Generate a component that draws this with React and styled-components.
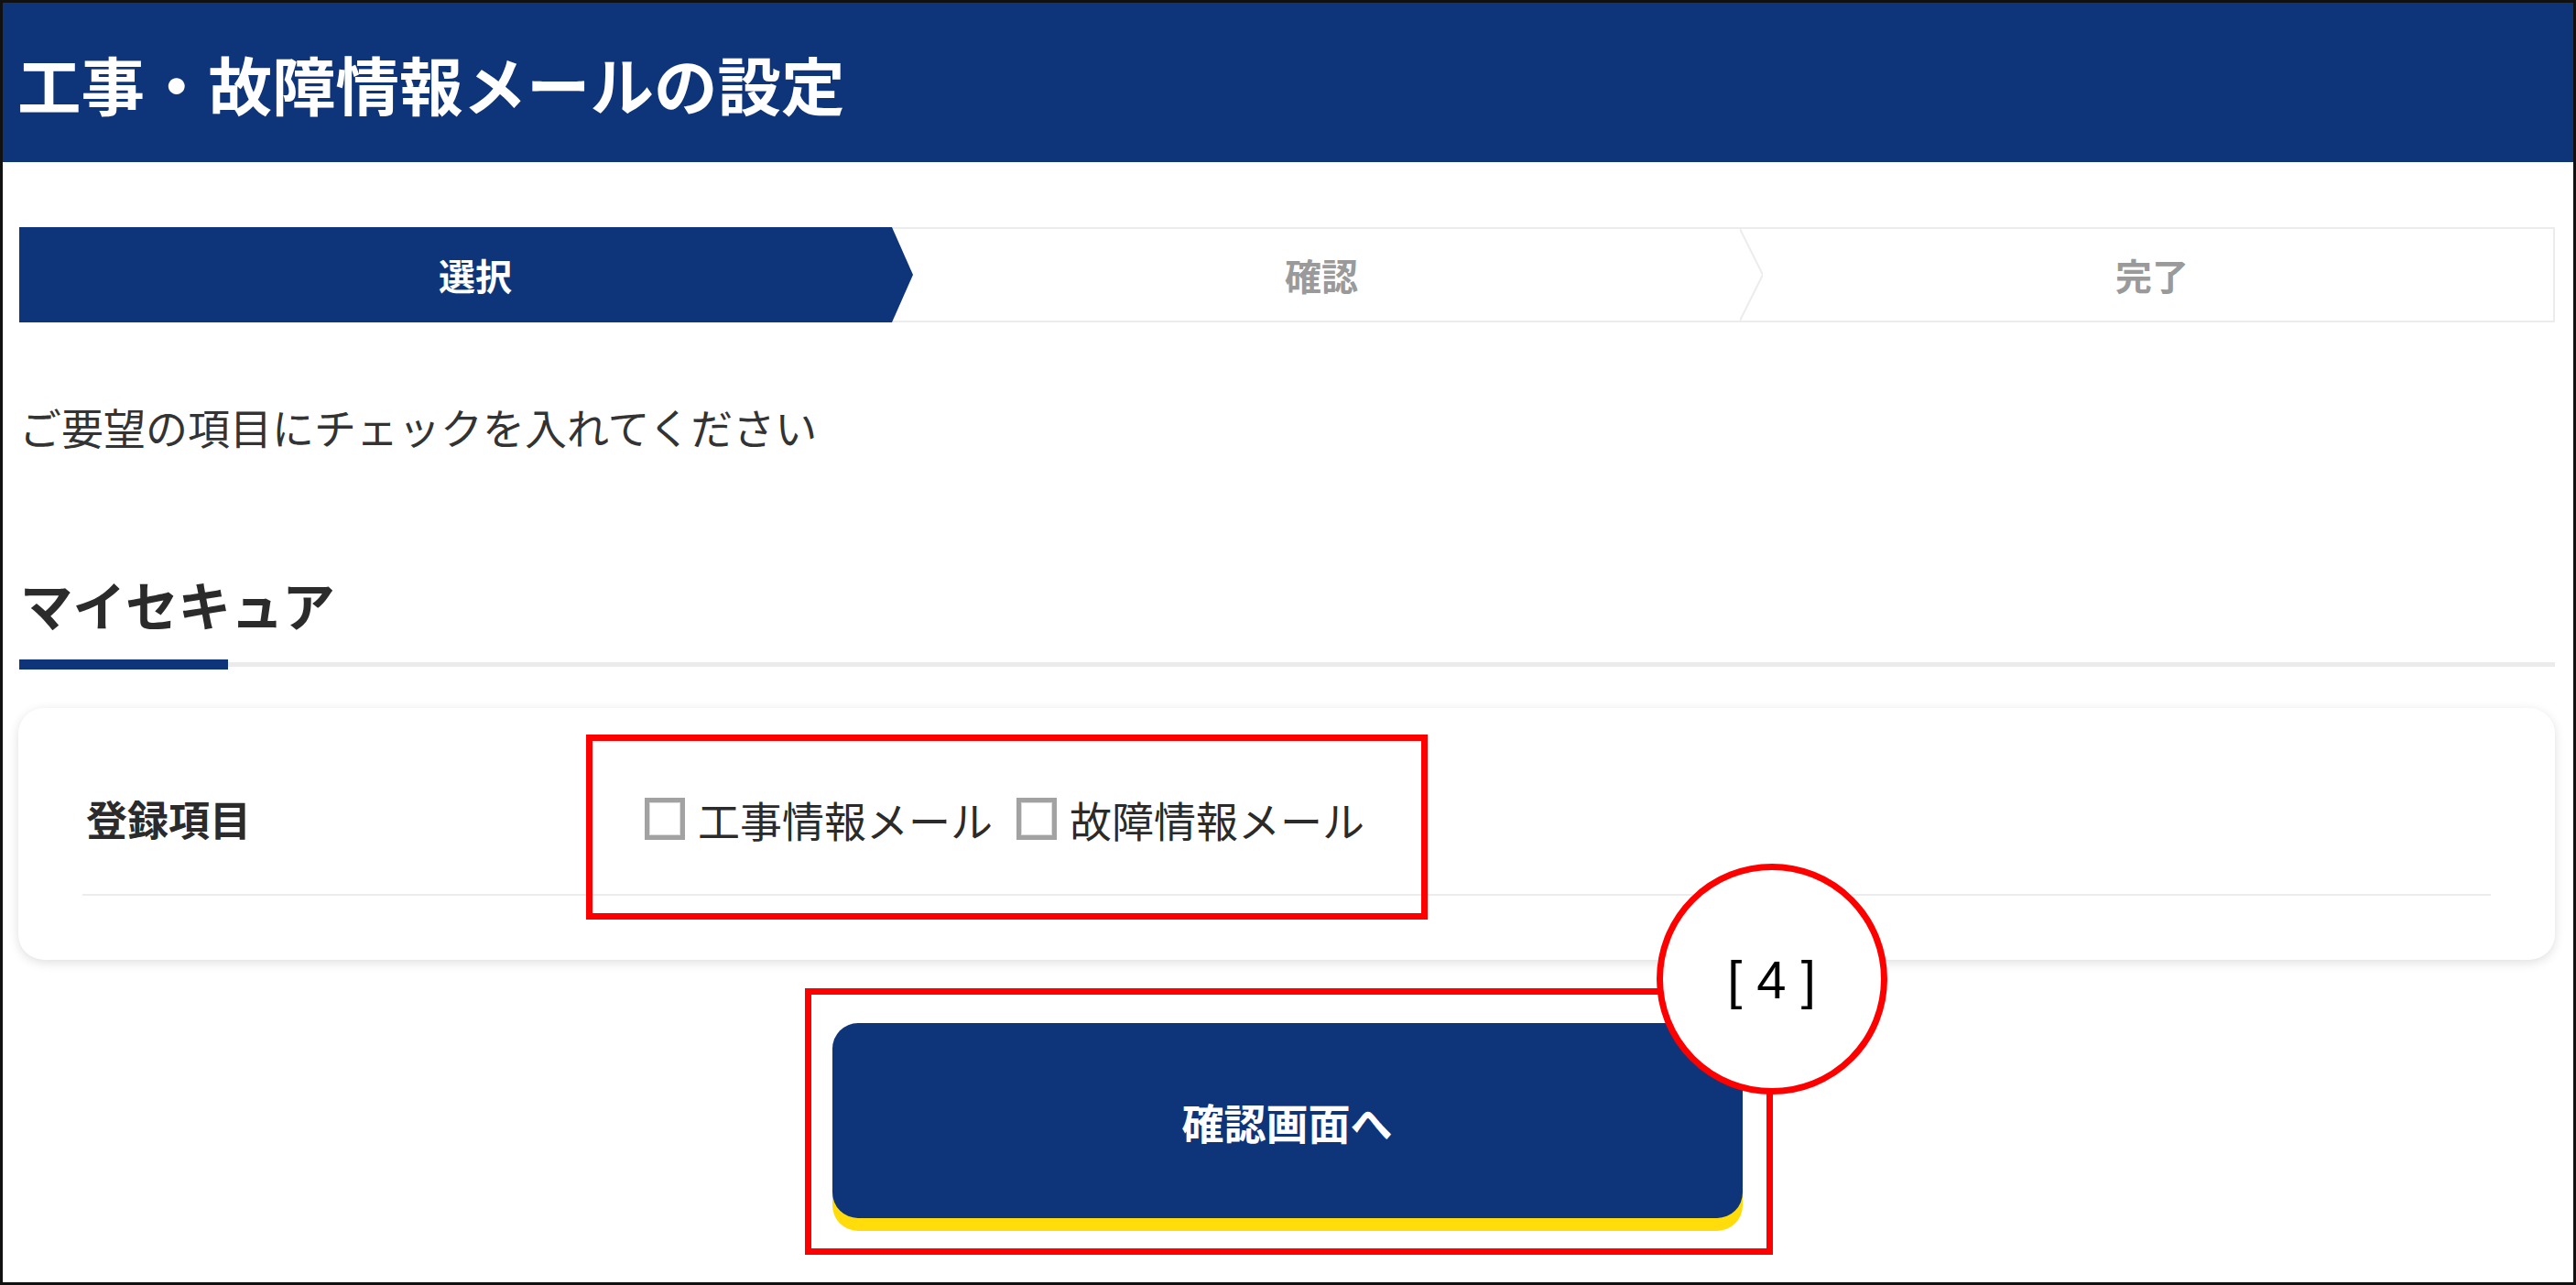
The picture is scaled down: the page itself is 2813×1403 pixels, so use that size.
import styled, { createGlobalStyle } from "styled-components"

const NAVY = "#0e357a"
const FONT = `"Noto Sans CJK JP", "Noto Sans", sans-serif`

const GlobalStyle = createGlobalStyle`
    html, body {
        margin: 0;
        padding: 0;
        background: #ffffff;
    }
    body {
        font-family: ${FONT};
        color: #333333;
    }
`

const Frame = styled.div`
    width: 2813px;
    height: 1403px;
    box-sizing: border-box;
    border: 3px solid #111111;
    overflow: hidden;
    background: #ffffff;
`

const Header = styled.header`
    height: 174px;
    background: ${NAVY};
    display: flex;
    align-items: center;
    padding-left: 16px;
`

const Title = styled.h1`
    margin: 0;
    color: #ffffff;
    font-size: 69.5px;
    font-weight: 700;
`

const Main = styled.main`
    padding: 71px 20px 0 18px;
`

const Stepper = styled.ol`
    display: flex;
    height: 104px;
    margin: 0;
    padding: 0;
    list-style: none;
    box-sizing: border-box;
    border: 2px solid #ececec;
    border-left: none;
`

const Step = styled.li`
    position: relative;
    box-sizing: border-box;
    display: flex;
    align-items: center;
    justify-content: center;
    font-size: 40px;
    font-weight: 700;
    color: #9a9a9a;
    flex: ${p => p.grow ? "1 1 auto" : `0 0 ${p.width}px`};
    ${p => p.active && `
        margin: -2px -23px -2px 0;
        padding-left: 20px;
        z-index: 1;
        color: #ffffff;
        background: ${NAVY};
        clip-path: polygon(0 0, calc(100% - 23px) 0, 100% 50%, calc(100% - 23px) 100%, 0 100%);
    `}
`

const Chevron = styled.svg`
    position: absolute;
    top: 0;
    right: -13px;
    width: 25px;
    height: 100%;
`

const Lead = styled.p`
    margin: 80px 0 0;
    font-size: 46px;
    line-height: 66px;
    color: #333333;
`

const SectionTitle = styled.h2`
    margin: 122px 0 0;
    padding-left: 1px;
    font-size: 57.5px;
    line-height: 78px;
    font-weight: 700;
    color: #2b2b2b;
`

const SectionRule = styled.div`
    display: flex;
    align-items: center;
    margin-top: 22px;
    height: 11px;
`

const RuleAccent = styled.span`
    width: 228px;
    height: 11px;
    background: ${NAVY};
`

const RuleLine = styled.span`
    flex: 1;
    height: 5px;
    background: #ebebeb;
`

const Card = styled.section`
    margin: 42px 0 0 -1px;
    padding: 60px 70px 70px;
    border-radius: 28px;
    background: #ffffff;
    box-shadow: 0 3px 12px rgba(0, 0, 0, 0.13);
`

const FieldRow = styled.div`
    display: flex;
    align-items: center;
    padding: 28px 0 50px;
    border-bottom: 2px solid #ececec;
`

const FieldLabel = styled.div`
    width: 614px;
    padding-left: 4px;
    box-sizing: border-box;
    font-size: 45px;
    font-weight: 700;
    color: #2b2b2b;
`

const Options = styled.div`
    position: relative;
    display: flex;
    align-items: center;
    gap: 26px;
`

const Option = styled.label`
    display: flex;
    align-items: center;
    gap: 14px;
    font-size: 46px;
    line-height: 52px;
    color: #2b2b2b;
`

const Box = styled.span`
    width: 44px;
    height: 46px;
    box-sizing: border-box;
    border: 5px solid #a2a2a2;
    box-shadow: inset 0 0 0 1px #dcdcdc;
    background: #ffffff;
`

const Callout = styled.span`
    position: absolute;
    top: ${p => p.top}px;
    right: ${p => p.right}px;
    bottom: ${p => p.bottom}px;
    left: ${p => p.left}px;
    border: 7px solid #ff0000;
    pointer-events: none;
`

const Actions = styled.div`
    display: flex;
    justify-content: center;
    margin-top: 69px;
`

const ButtonWrap = styled.div`
    position: relative;
`

const PrimaryButton = styled.button`
    display: block;
    width: 994px;
    height: 213px;
    border: none;
    border-radius: 28px;
    background: ${NAVY};
    box-shadow: 0 14px 0 #ffdc0a;
    color: #ffffff;
    font-family: ${FONT};
    font-size: 46px;
    font-weight: 700;
    cursor: pointer;
`

const Marker = styled.div`
    position: absolute;
    top: -174px;
    right: -158px;
    width: 252px;
    height: 252px;
    box-sizing: border-box;
    border: 7px solid #ff0000;
    border-radius: 50%;
    background: #ffffff;
    display: flex;
    align-items: center;
    justify-content: center;
    z-index: 2;
    font-family: "Liberation Sans", "Noto Sans", sans-serif;
    font-size: 58px;
    color: #000000;
    letter-spacing: 0;
`

function App() {
    return (
        <>
            <GlobalStyle />
            <Frame>
                <Header>
                    <Title>工事・故障情報メールの設定</Title>
                </Header>
                <Main>
                    <Stepper>
                        <Step active width={976}>選択</Step>
                        <Step width={938}>
                            確認
                            <Chevron viewBox="0 0 25 100" preserveAspectRatio="none">
                                <polyline points="0,0 25,50 0,100" fill="none" stroke="#ececec" strokeWidth="2" vectorEffect="non-scaling-stroke" />
                            </Chevron>
                        </Step>
                        <Step grow>完了</Step>
                    </Stepper>

                    <Lead>ご要望の項目にチェックを入れてください</Lead>

                    <SectionTitle>マイセキュア</SectionTitle>
                    <SectionRule>
                        <RuleAccent />
                        <RuleLine />
                    </SectionRule>

                    <Card>
                        <FieldRow>
                            <FieldLabel>登録項目</FieldLabel>
                            <Options>
                                <Option><Box />工事情報メール</Option>
                                <Option><Box />故障情報メール</Option>
                                <Callout top={-66} right={-69} bottom={-84} left={-64} />
                            </Options>
                        </FieldRow>
                    </Card>

                    <Actions>
                        <ButtonWrap>
                            <PrimaryButton>確認画面へ</PrimaryButton>
                            <Callout top={-38} right={-33} bottom={-40} left={-30} />
                            <Marker>[ 4 ]</Marker>
                        </ButtonWrap>
                    </Actions>
                </Main>
            </Frame>
        </>
    )
}

export default App
